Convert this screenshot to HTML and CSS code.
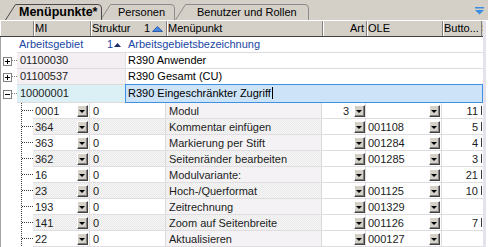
FILE: index.html
```html
<!DOCTYPE html>
<html lang="de">
<head>
<meta charset="utf-8">
<title>Menüpunkte</title>
<link rel="stylesheet" href="styles.css">
</head>
<body>
<div class="window">
  <div class="tabbar">
    <div class="tab tab-1 active">
      <svg class="tab-shape" width="97" height="16" viewBox="0 0 97 16"><path d="M0.5 16 L10.5 0.5 H93 Q96.5 0.5 96.5 4 V16"/></svg>
      <span class="tab-label">Menüpunkte*</span>
    </div>
    <div class="tab tab-2">
      <svg class="tab-shape" width="76" height="16" viewBox="0 0 76 16"><path d="M0.5 16 L10.5 0.5 H71 Q74.5 0.5 74.5 4 V16"/></svg>
      <span class="tab-label">Personen</span>
    </div>
    <div class="tab tab-3">
      <svg class="tab-shape" width="135" height="16" viewBox="0 0 135 16"><path d="M0.5 16 L10.5 0.5 H130 Q133.5 0.5 133.5 4 V16"/></svg>
      <span class="tab-label">Benutzer und Rollen</span>
    </div>
    <svg class="band-icon" width="9" height="8" viewBox="0 0 9 8"><rect x="0" y="0" width="9" height="1.5"/><path d="M0 3 H9 L4.5 7.5 Z"/></svg>
  </div>

  <div class="grid">
    <div class="grid-main">
      <div class="hdr">
        <div class="hc c-sel"></div>
        <div class="hc c-mi">MI</div>
        <div class="hc c-st"><span>Struktur</span><span class="sort">1<svg class="sort-up" width="11" height="6" viewBox="0 0 11 6"><path d="M0.5 5.5 L5.5 0.5 L10.5 5.5 Z"/></svg></span></div>
        <div class="hc c-mp">Menüpunkt</div>
        <div class="hc c-art">Art</div>
        <div class="hc c-ole">OLE</div>
        <div class="hc c-btn">Butto...</div>
        <div class="hc c-s">S</div>
      </div>

      <div class="rows">
        <div class="band-hdr">
          <div class="tree-p blank"></div>
          <div class="bh-ag"><span>Arbeitsgebiet</span><span class="sort">1<svg class="sort-small" width="7" height="4" viewBox="0 0 7 4"><path d="M0 4 L3.5 0 L7 4 Z"/></svg></span></div>
          <div class="bh-bez">Arbeitsgebietsbezeichnung</div>
        </div>

        <div class="prow">
          <div class="tree-p"><span class="exp plus"></span></div>
          <div class="p-mi">01100030</div>
          <div class="p-bez">R390 Anwender</div>
        </div>
        <div class="prow">
          <div class="tree-p"><span class="exp plus"></span></div>
          <div class="p-mi">01100537</div>
          <div class="p-bez">R390 Gesamt (CU)</div>
        </div>
        <div class="prow prow-edit">
          <div class="tree-p"><span class="exp"></span></div>
          <div class="p-mi">10000001</div>
          <div class="p-edit">R390 Eingeschränkter Zugriff<span class="caret"></span></div>
        </div>

        <div class="crow">
          <div class="tree-c"></div>
          <div class="k-mi"><span class="txt">0001</span><span class="dd"></span></div>
          <div class="k-st">0</div>
          <div class="k-mp">Modul</div>
          <div class="k-art"><span class="num">3</span><span class="dd"></span></div>
          <div class="k-ole"><span class="txt"></span><span class="dd"></span></div>
          <div class="k-btn">11</div>
          <div class="k-s"><span class="mark"></span></div>
        </div>
        <div class="crow dither">
          <div class="tree-c"></div>
          <div class="k-mi"><span class="txt">364</span><span class="dd"></span></div>
          <div class="k-st">0</div>
          <div class="k-mp">Kommentar einfügen</div>
          <div class="k-art"><span class="num"></span><span class="dd"></span></div>
          <div class="k-ole"><span class="txt">001108</span><span class="dd"></span></div>
          <div class="k-btn">5</div>
          <div class="k-s"><span class="mark"></span></div>
        </div>
        <div class="crow">
          <div class="tree-c"></div>
          <div class="k-mi"><span class="txt">363</span><span class="dd"></span></div>
          <div class="k-st">0</div>
          <div class="k-mp">Markierung per Stift</div>
          <div class="k-art"><span class="num"></span><span class="dd"></span></div>
          <div class="k-ole"><span class="txt">001284</span><span class="dd"></span></div>
          <div class="k-btn">4</div>
          <div class="k-s"><span class="mark"></span></div>
        </div>
        <div class="crow dither">
          <div class="tree-c"></div>
          <div class="k-mi"><span class="txt">362</span><span class="dd"></span></div>
          <div class="k-st">0</div>
          <div class="k-mp">Seitenränder bearbeiten</div>
          <div class="k-art"><span class="num"></span><span class="dd"></span></div>
          <div class="k-ole"><span class="txt">001285</span><span class="dd"></span></div>
          <div class="k-btn">3</div>
          <div class="k-s"><span class="mark"></span></div>
        </div>
        <div class="crow">
          <div class="tree-c"></div>
          <div class="k-mi"><span class="txt">16</span><span class="dd"></span></div>
          <div class="k-st">0</div>
          <div class="k-mp">Modulvariante:</div>
          <div class="k-art"><span class="num"></span><span class="dd"></span></div>
          <div class="k-ole"><span class="txt"></span><span class="dd"></span></div>
          <div class="k-btn">21</div>
          <div class="k-s"><span class="mark"></span></div>
        </div>
        <div class="crow dither">
          <div class="tree-c"></div>
          <div class="k-mi"><span class="txt">23</span><span class="dd"></span></div>
          <div class="k-st">0</div>
          <div class="k-mp">Hoch-/Querformat</div>
          <div class="k-art"><span class="num"></span><span class="dd"></span></div>
          <div class="k-ole"><span class="txt">001125</span><span class="dd"></span></div>
          <div class="k-btn">10</div>
          <div class="k-s"><span class="mark"></span></div>
        </div>
        <div class="crow">
          <div class="tree-c"></div>
          <div class="k-mi"><span class="txt">193</span><span class="dd"></span></div>
          <div class="k-st">0</div>
          <div class="k-mp">Zeitrechnung</div>
          <div class="k-art"><span class="num"></span><span class="dd"></span></div>
          <div class="k-ole"><span class="txt">001329</span><span class="dd"></span></div>
          <div class="k-btn"></div>
          <div class="k-s"></div>
        </div>
        <div class="crow dither">
          <div class="tree-c"></div>
          <div class="k-mi"><span class="txt">141</span><span class="dd"></span></div>
          <div class="k-st">0</div>
          <div class="k-mp">Zoom auf Seitenbreite</div>
          <div class="k-art"><span class="num"></span><span class="dd"></span></div>
          <div class="k-ole"><span class="txt">001126</span><span class="dd"></span></div>
          <div class="k-btn">7</div>
          <div class="k-s"><span class="mark"></span></div>
        </div>
        <div class="crow">
          <div class="tree-c"></div>
          <div class="k-mi"><span class="txt">22</span><span class="dd"></span></div>
          <div class="k-st">0</div>
          <div class="k-mp">Aktualisieren</div>
          <div class="k-art"><span class="num"></span><span class="dd"></span></div>
          <div class="k-ole"><span class="txt">000127</span><span class="dd"></span></div>
          <div class="k-btn"></div>
          <div class="k-s"></div>
        </div>
      </div>
    </div>
    <div class="vstrip"></div>
    <div class="vgap"></div>
  </div>
</div>
</body>
</html>
```

FILE: styles.css
```css
* { box-sizing: border-box; }
html, body { margin: 0; padding: 0; }
body {
  font-family: "Liberation Sans", Arial, sans-serif;
  font-size: 11px;
  color: #000;
  background: #fff;
}
.window {
  width: 488px;
  height: 247px;
  overflow: hidden;
  background: #fff;
}

/* ---------- tab strip ---------- */
.tabbar {
  display: flex;
  align-items: flex-start;
  height: 21px;
  padding: 4px 0 0 5px;
  background: #d4d0c8;
  border-bottom: 1px solid #fff;
}
.tab {
  position: relative;
  height: 16px;
  display: flex;
  align-items: center;
  flex: none;
  white-space: nowrap;
}
.tab-shape { position: absolute; left: 0; top: 0; }
.tab-shape path { fill: #d4d0c8; stroke: #8c8c8c; stroke-width: 1; }
.active .tab-shape path { stroke: #4a4a4a; }
.tab-label { position: relative; font-size: 11px; line-height: 16px; }
.active .tab-label { font-weight: bold; font-size: 12.5px; }
.tab-1 { width: 97px; padding-left: 14px; z-index: 3; }
.tab-2 { width: 76px; padding-left: 18px; margin-left: -2px; z-index: 2; }
.tab-3 { width: 135px; padding-left: 22px; margin-left: -1px; z-index: 1; }
.band-icon { margin: 3px 4px 0 auto; fill: #3a8de0; flex: none; }

/* ---------- grid ---------- */
.grid { display: flex; height: 226px; }
.grid-main { width: 483px; flex: none; }
.vstrip { width: 3px; background: #e6e2ec; flex: none; }
.vgap { width: 2px; background: #fff; flex: none; }

.hdr {
  display: flex;
  height: 16px;
  background: #d4d0c8;
  border-bottom: 1px solid #404040;
}
.hc {
  height: 15px;
  line-height: 15px;
  padding-left: 1px;
  border-right: 1px solid #808080;
  box-shadow: inset 1px 0 #fff;
  white-space: nowrap;
  overflow: hidden;
  flex: none;
}
.c-sel { width: 34px; }
.c-mi { width: 57px; }
.c-st { width: 76px; display: flex; justify-content: space-between; padding-right: 3px; }
.c-mp { width: 156px; }
.c-art { width: 44px; text-align: right; padding-right: 2px; }
.c-ole { width: 76px; }
.c-btn { width: 39px; }
.c-s { width: 1px; border-right: 0; box-shadow: none; padding-left: 0; }

.sort { display: flex; align-items: center; }
.sort-up { margin-left: 2px; fill: #4a86da; stroke: #2b5cae; stroke-width: 1; }
.sort-small { margin-left: 1px; fill: #1c2a6e; }

.rows { box-shadow: inset 1px 0 #a4a4a4; }

/* band header (filter row) */
.band-hdr {
  display: flex;
  height: 16px;
  line-height: 15px;
  color: #1a47a4;
}
.bh-ag {
  width: 108px;
  display: flex;
  justify-content: space-between;
  padding: 0 4px 0 2px;
  border-bottom: 1px solid #dedbde;
}
.bh-bez {
  width: 358px;
  padding-left: 3px;
  border-bottom: 1px solid #dedbde;
}

/* parent rows */
.prow { display: flex; height: 16px; }
.tree-p {
  width: 17px;
  flex: none;
  display: flex;
  align-items: center;
  background: repeating-linear-gradient(to right, #808080 0 1px, transparent 1px 2px) 12px 7px / 5px 1px no-repeat;
}
.tree-p.blank { background: none; }
.prow-edit .tree-p { background-position: 12px 8px; }
.exp {
  position: relative;
  width: 9px;
  height: 9px;
  margin-left: 3px;
  border: 1px solid #808080;
  background: #fff;
}
.exp::before {
  content: "";
  position: absolute;
  left: 1px; top: 3px;
  width: 5px; height: 1px;
  background: #000;
}
.exp.plus::after {
  content: "";
  position: absolute;
  left: 3px; top: 1px;
  width: 1px; height: 5px;
  background: #000;
}
.p-mi {
  width: 108px;
  flex: none;
  padding-left: 3px;
  line-height: 15px;
  color: #222;
  background: #f3eff3;
  border-bottom: 1px solid #dedbde;
}
.p-bez {
  width: 358px;
  flex: none;
  padding-left: 2px;
  line-height: 15px;
  border-left: 1px solid #e2dfe2;
  border-bottom: 1px solid #dedbde;
}
.prow-edit { height: 18px; }
.prow-edit .p-mi { background: #daf0f5; line-height: 17px; }
.p-edit {
  width: 358px;
  flex: none;
  height: 19px;
  margin-top: -1px;
  padding-left: 2px;
  line-height: 17px;
  background: #cde4f8;
  border: 1px solid #3d91e4;
  white-space: nowrap;
}
.caret {
  display: inline-block;
  width: 1px;
  height: 12px;
  margin-left: 1px;
  background: #000;
  vertical-align: -2px;
}

/* child rows */
.crow { display: flex; height: 16px; }
.tree-c {
  width: 33px;
  flex: none;
  background-image:
    repeating-linear-gradient(to bottom, #3c3c3c 0 1px, transparent 1px 2px),
    repeating-linear-gradient(to right, #3c3c3c 0 1px, transparent 1px 2px);
  background-size: 1px 16px, 11px 1px;
  background-position: 21px 0, 22px 7px;
  background-repeat: no-repeat;
}
.crow > div:not(.tree-c) {
  flex: none;
  display: flex;
  align-items: center;
  height: 16px;
  border-bottom: 1px solid #e0dde0;
  white-space: nowrap;
  color: #1c1c1c;
}
.k-mi { width: 57px; padding-left: 2px; border-right: 1px solid #e0dde0; }
.k-st { width: 76px; padding-left: 3px; border-right: 1px solid #dcd9dc; }
.k-mp { width: 156px; padding-left: 3px; border-right: 1px solid #dcd9dc; background: #f4f2f5; }
.crow > .k-mp { color: #454545; }
.k-art { width: 44px; border-right: 1px solid #e0dde0; }
.k-ole { width: 76px; padding-left: 2px; border-right: 1px solid #e0dde0; }
.k-btn { width: 39px; justify-content: flex-end; padding-right: 3px; }
.k-s { width: 2px; }
.txt { flex: 1; }
.num { flex: 1; text-align: right; padding-right: 5px; }
.k-mi .dd { margin-right: 1px; }
.k-ole .dd { margin-right: 1px; }
.mark { display: block; width: 1px; height: 9px; background: #3a3a3a; }

.dither > .k-mi,
.dither > .k-st,
.dither > .k-mp {
  background: repeating-conic-gradient(#e9e9e9 0 25%, #f6f6f6 0 50%) 0 0 / 2px 2px;
}

.dd {
  flex: none;
  width: 11px;
  height: 12px;
  display: flex;
  align-items: center;
  justify-content: center;
  background: #d4d0c8;
  border: 1px solid;
  border-color: #fff #404040 #404040 #fff;
  box-shadow: inset -1px -1px #808080;
}
.dd::after {
  content: "";
  width: 0;
  height: 0;
  margin: 1px 1px 0 0;
  border-top: 3px solid #000;
  border-left: 3px solid transparent;
  border-right: 3px solid transparent;
}
```
